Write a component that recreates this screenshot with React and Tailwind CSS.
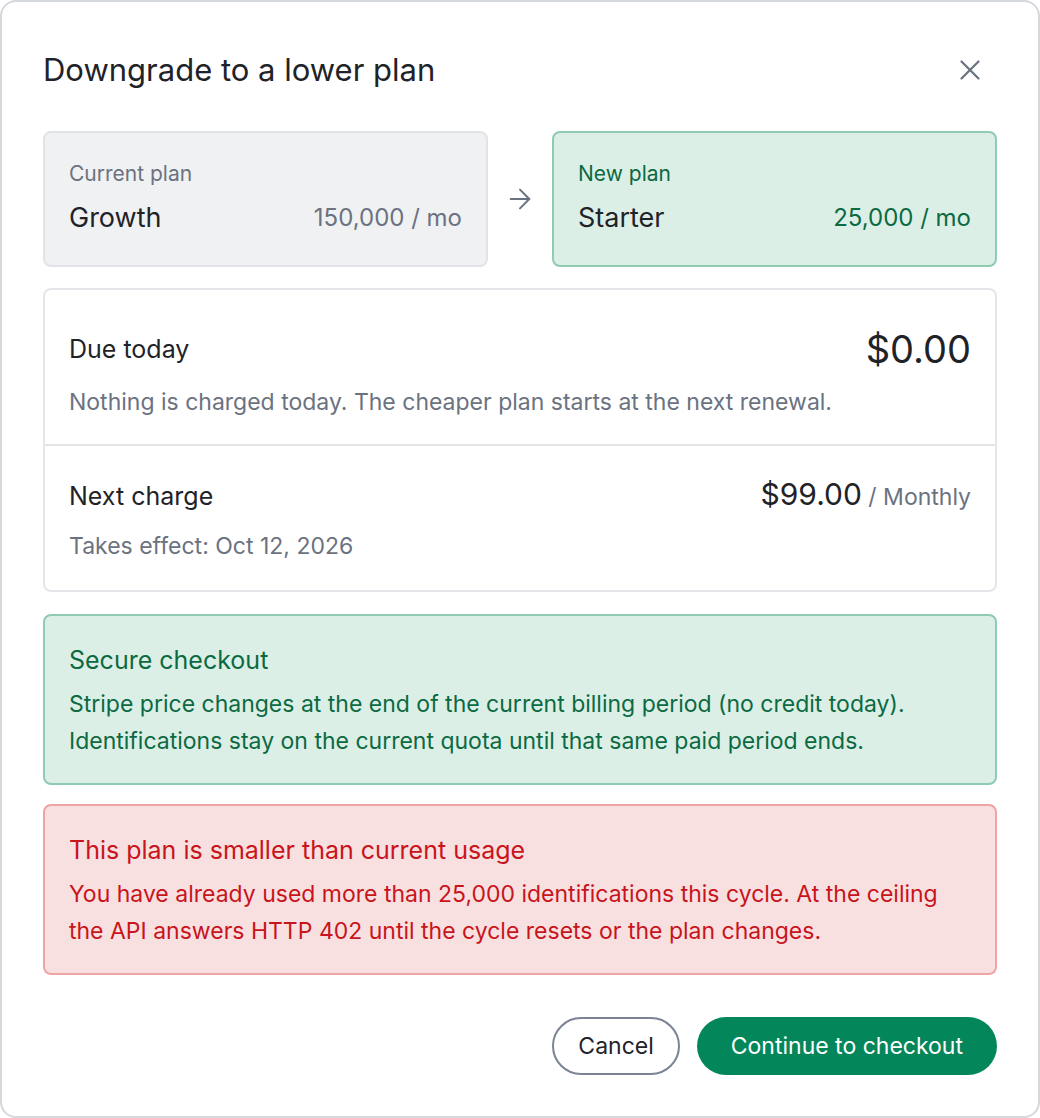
import React from 'react';
import { ArrowRight, X } from 'lucide-react';

// Plan summary card (current / new)
const PlanCard = ({ label, name, quota, tone = 'gray' }) => {
  const tones = {
    gray: {
      box: 'bg-[#f0f1f3] border-[#e1e3e7]',
      label: 'text-[#6b7280]',
      quota: 'text-[#6b7280]',
    },
    green: {
      box: 'bg-[#dcefe7] border-[#8fcbb2]',
      label: 'text-[#0b6a42]',
      quota: 'text-[#0b6a42]',
    },
  };
  const t = tones[tone];

  return (
    <div className={`flex-1 rounded-lg border-2 px-[24px] pt-[26px] pb-[29px] ${t.box}`}>
      <div className={`text-[21px] leading-[30px] ${t.label}`}>{label}</div>
      <div className="mt-[11px] flex items-center justify-between">
        <span className="text-[27px] leading-[36px] text-[#1f2328]">{name}</span>
        <span className={`text-[24px] leading-[36px] ${t.quota}`}>{quota}</span>
      </div>
    </div>
  );
};

// Info / warning notice
const Notice = ({ title, children, tone }) => {
  const tones = {
    green: 'bg-[#dcefe7] border-[#8fcbb2] text-[#0b6a42]',
    red: 'bg-[#f8e0e1] border-[#eea3a5] text-[#c8141b]',
  };
  return (
    <div className={`rounded-lg border-2 px-[24px] pt-[28px] pb-[23px] ${tones[tone]}`}>
      <div className="text-[25px] leading-[32px]">{title}</div>
      <p className="mt-[10px] text-[23px] leading-[37px]">{children}</p>
    </div>
  );
};

export default function App() {
  return (
    <div
      className="min-h-[1118px] w-[1040px] rounded-2xl border-2 border-[#d5d8dd] bg-white px-[41px] pt-[40px] pb-[40px]"
      style={{ fontFamily: 'Inter, "Noto Sans", sans-serif' }}
    >
      {/* Header */}
      <div className="flex h-[56px] items-center justify-between">
        <h2 className="text-[31px] font-normal text-[#1f2328]">Downgrade to a lower plan</h2>
        <button className="mr-[7px] flex h-[40px] w-[40px] items-center justify-center text-[#6b7280]">
          <X size={34} strokeWidth={1.6} />
        </button>
      </div>

      {/* Plan comparison */}
      <div className="mt-[33px] flex items-center">
        <PlanCard label="Current plan" name="Growth" quota="150,000 / mo" />
        <div className="flex w-[64px] justify-center text-[#6b7280]">
          <ArrowRight size={32} strokeWidth={1.5} />
        </div>
        <PlanCard label="New plan" name="Starter" quota="25,000 / mo" tone="green" />
      </div>

      {/* Charges */}
      <div className="mt-[21px] rounded-lg border-2 border-[#e4e6ea]">
        <div className="px-[24px] pt-[30px] pb-[26px]">
          <div className="flex items-center justify-between">
            <span className="text-[25px] leading-[58px] text-[#1f2328]">Due today</span>
            <span className="text-[38px] leading-[58px] text-[#1f2328]">$0.00</span>
          </div>
          <p className="mt-[8px] text-[23px] leading-[32px] text-[#6b7280]">
            Nothing is charged today. The cheaper plan starts at the next renewal.
          </p>
        </div>
        <div className="border-t-2 border-[#e4e6ea] px-[24px] pt-[28px] pb-[28px]">
          <div className="flex items-baseline justify-between">
            <span className="text-[25px] leading-[40px] text-[#1f2328]">Next charge</span>
            <span className="text-[#1f2328]">
              <span className="text-[30px] leading-[40px]">$99.00</span>
              <span className="text-[23px] text-[#6b7280]"> / Monthly</span>
            </span>
          </div>
          <p className="mt-[14px] text-[23px] leading-[32px] text-[#6b7280]">Takes effect: Oct 12, 2026</p>
        </div>
      </div>

      {/* Notices */}
      <div className="mt-[22px]">
        <Notice title="Secure checkout" tone="green">
          Stripe price changes at the end of the current billing period (no credit today).
          <br />
          Identifications stay on the current quota until that same paid period ends.
        </Notice>
      </div>
      <div className="mt-[19px]">
        <Notice title="This plan is smaller than current usage" tone="red">
          You have already used more than 25,000 identifications this cycle. At the ceiling
          <br />
          the API answers HTTP 402 until the cycle resets or the plan changes.
        </Notice>
      </div>

      {/* Actions */}
      <div className="mt-[42px] flex justify-end gap-[17px]">
        <button className="h-[58px] rounded-full border-2 border-[#7b8494] bg-white px-[24px] text-[23px] text-[#1f2328]">
          Cancel
        </button>
        <button className="h-[58px] rounded-full bg-[#03875a] px-[34px] text-[23px] text-white">
          Continue to checkout
        </button>
      </div>
    </div>
  );
}
